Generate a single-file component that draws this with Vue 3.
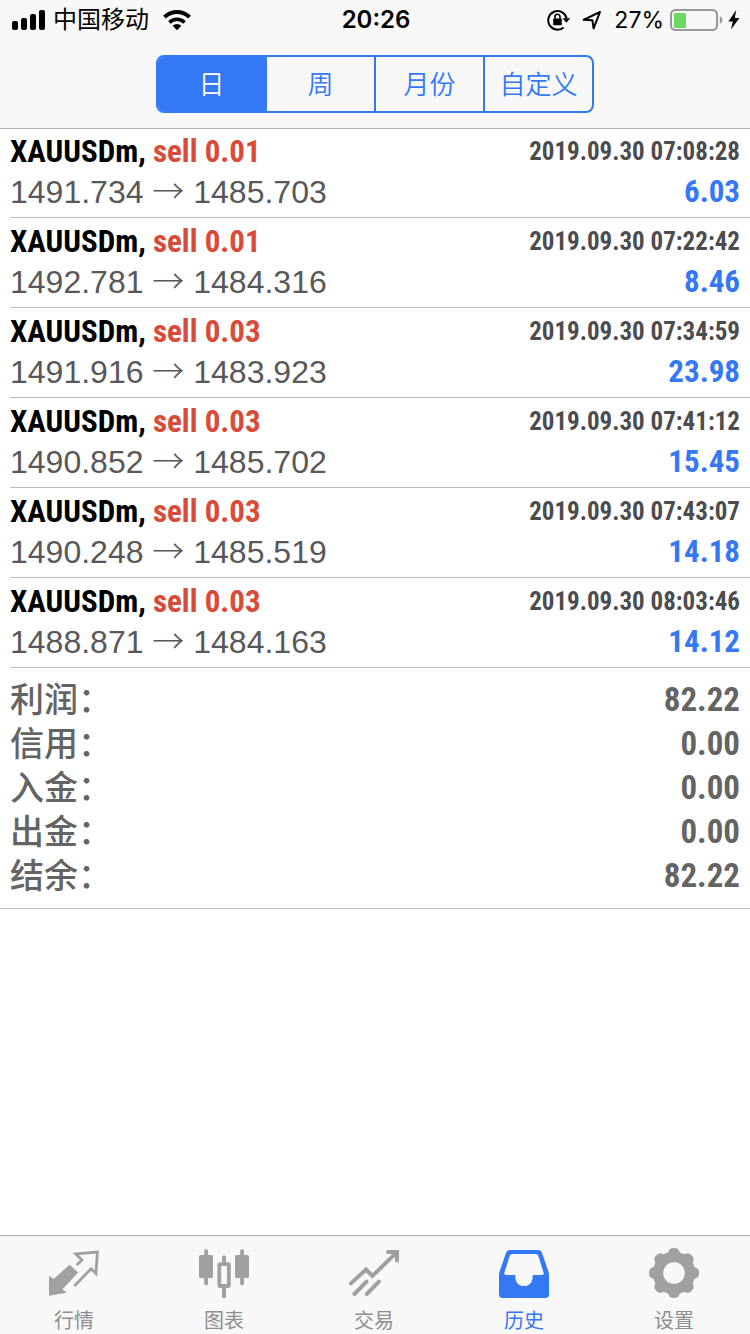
<script setup>
import { ref } from 'vue'

const periods = ['日', '周', '月份', '自定义']
const period = ref('日')

const deals = [
  { volume: '0.01', open: '1491.734', close: '1485.703', time: '2019.09.30 07:08:28', profit: '6.03' },
  { volume: '0.01', open: '1492.781', close: '1484.316', time: '2019.09.30 07:22:42', profit: '8.46' },
  { volume: '0.03', open: '1491.916', close: '1483.923', time: '2019.09.30 07:34:59', profit: '23.98' },
  { volume: '0.03', open: '1490.852', close: '1485.702', time: '2019.09.30 07:41:12', profit: '15.45' },
  { volume: '0.03', open: '1490.248', close: '1485.519', time: '2019.09.30 07:43:07', profit: '14.18' },
  { volume: '0.03', open: '1488.871', close: '1484.163', time: '2019.09.30 08:03:46', profit: '14.12' },
]

const totals = [
  { label: '利润', value: '82.22' },
  { label: '信用', value: '0.00' },
  { label: '入金', value: '0.00' },
  { label: '出金', value: '0.00' },
  { label: '结余', value: '82.22' },
]
</script>

<template>
  <div class="screen">
    <header class="top">
      <div class="status">
        <div class="status-left">
          <svg class="signal" width="34" height="22" viewBox="0 0 34 22" aria-hidden="true">
            <rect x="0" y="12" width="6" height="9" rx="2" />
            <rect x="9" y="9" width="6" height="12" rx="2" />
            <rect x="18" y="5" width="6" height="16" rx="2" />
            <rect x="27" y="1" width="6" height="20" rx="2" />
          </svg>
          <span class="carrier">中国移动</span>
          <svg class="wifi" width="28" height="22" viewBox="0 0 28 22" aria-hidden="true">
            <path d="M1.5 8.2a17.7 17.7 0 0 1 25 0" fill="none" stroke="#000" stroke-width="4" />
            <path d="M6.5 13.4a10.6 10.6 0 0 1 15 0" fill="none" stroke="#000" stroke-width="3.6" />
            <path d="M9.6 16.8a6.2 6.2 0 0 1 8.8 0L14 21.2Z" />
          </svg>
        </div>
        <time class="clock">20:26</time>
        <div class="status-right">
          <svg width="24" height="22" viewBox="0 0 24 22" aria-hidden="true">
            <path d="M16.6 18.4A9.3 9.3 0 1 1 19.6 9.2" fill="none" stroke="#000" stroke-width="2" />
            <path d="M15.6 9.2h7.6l-3.8 4.6Z" />
            <rect x="6.2" y="9.6" width="8.6" height="6.6" rx="0.8" />
            <path d="M8 10V7.8a2.5 2.5 0 0 1 5 0V10" fill="none" stroke="#000" stroke-width="1.6" />
          </svg>
          <svg class="locate" width="20" height="20" viewBox="0 0 20 20" aria-hidden="true">
            <path d="M1.6 9.8 18 2 11.6 18.4 10.4 10.2Z" fill="none" stroke="#000" stroke-width="2" stroke-linejoin="round" />
          </svg>
          <span class="percent">27%</span>
          <svg class="battery" width="54" height="22" viewBox="0 0 54 22" aria-hidden="true">
            <rect x="1" y="1" width="46" height="20" rx="4.5" fill="none" stroke="#98989a" stroke-width="2" />
            <rect x="4" y="4" width="12" height="15" rx="1" fill="#6cd864" />
            <path d="M49.8 7.2c3.6 1.4 3.6 6.2 0 7.6Z" fill="#98989a" />
          </svg>
          <svg class="bolt" width="12" height="20" viewBox="0 0 12 20" aria-hidden="true">
            <path d="M8.2 0 .4 11.4h4.4L3 19.6 11.4 8H6.8Z" />
          </svg>
        </div>
      </div>
      <div class="segments" role="group">
        <button
          v-for="p in periods"
          :key="p"
          type="button"
          class="segment"
          :class="{ on: p === period }"
          :aria-pressed="p === period"
          @click="period = p"
        >{{ p }}</button>
      </div>
    </header>

    <main class="content">
      <ul class="deals">
        <li v-for="d in deals" :key="d.time" class="deal">
          <div class="line">
            <span class="symbol">XAUUSDm, <span class="sell">sell {{ d.volume }}</span></span>
            <time class="when">{{ d.time }}</time>
          </div>
          <div class="line">
            <span class="prices">{{ d.open }} <span class="arrow">→</span> {{ d.close }}</span>
            <span class="profit">{{ d.profit }}</span>
          </div>
        </li>
      </ul>
      <dl class="totals">
        <div v-for="t in totals" :key="t.label" class="total">
          <dt>{{ t.label }}：</dt>
          <dd>{{ t.value }}</dd>
        </div>
      </dl>
    </main>

    <nav class="tabs">
      <a href="#quotes" class="tab">
        <svg width="50" height="50" viewBox="0 0 50 50" aria-hidden="true">
          <path d="M0 27.7 4.6 31 20.6 16.8 29.3 24.6 13.4 41.2 17.8 44.8 0 47.8Z" />
          <path d="M27.7 17 33 12 26.6 5.8 48.4 4 47 25.4 42 20.8 25.4 38" fill="none" stroke="currentColor" stroke-width="2.8" />
        </svg>
        <span>行情</span>
      </a>
      <a href="#charts" class="tab">
        <svg width="50" height="50" viewBox="0 0 50 50" aria-hidden="true">
          <rect x="5.2" y="1.2" width="3.8" height="36" rx="1.5" />
          <rect x="0" y="7" width="14" height="23" rx="1.5" />
          <rect x="41.2" y="1.2" width="3.8" height="36" rx="1.5" />
          <rect x="36" y="7" width="14" height="23" rx="1.5" />
          <rect x="23" y="7.6" width="4" height="9" rx="1.5" />
          <rect x="23" y="38" width="4" height="12" rx="1.5" />
          <rect x="20.3" y="16.2" width="9.6" height="21.8" rx="0.5" fill="none" stroke="currentColor" stroke-width="3.8" />
        </svg>
        <span>图表</span>
      </a>
      <a href="#trade" class="tab">
        <svg width="50" height="50" viewBox="0 0 50 50" aria-hidden="true">
          <g fill="none" stroke="currentColor" stroke-width="4" stroke-linecap="round">
            <path d="M2 35.4 17 21.6 23.4 28 47.6 4.4" />
            <path d="M39 4H48V12.4" />
            <path d="M17.6 33.6 5.4 46" />
            <path d="M30 33.6 17.8 46" />
          </g>
        </svg>
        <span>交易</span>
      </a>
      <a href="#history" class="tab active" aria-current="page">
        <svg width="50" height="50" viewBox="0 0 50 50" aria-hidden="true">
          <path
            fill-rule="evenodd"
            d="M11.2 2H38.8C41 2 42.4 3 43 5L49.4 23.6Q50 25.4 50 27V46.6Q50 50 46.6 50H3.4Q0 50 0 46.6V27Q0 25.4 .6 23.6L7 5C7.6 3 9 2 11.2 2ZM13.4 6Q11.2 6 10.6 8L5.4 24.6Q4.8 27 6.8 27H15.6Q16.4 27 16.4 28.4C16.2 34.6 19.8 38 25 38S33.8 34.6 33.6 28.4Q33.6 27 34.4 27H43.2Q45.2 27 44.6 24.6L39.4 8Q38.8 6 36.6 6Z"
          />
        </svg>
        <span>历史</span>
      </a>
      <a href="#settings" class="tab">
        <svg width="50" height="50" viewBox="0 0 50 50" aria-hidden="true">
          <circle cx="25" cy="25" r="16" fill="none" stroke="currentColor" stroke-width="10.4" />
          <g v-for="a in 8" :key="a" :transform="`rotate(${a * 45} 25 25)`">
            <path d="M16.6 6.4C18.6 5.4 19.2 4.6 19.8 3 20.6.8 22 0 25 0S29.4.8 30.2 3C30.8 4.6 31.4 5.4 33.4 6.4L30 12H20Z" />
          </g>
        </svg>
        <span>设置</span>
      </a>
    </nav>
  </div>
</template>

<style>
body {
  margin: 0;
  background: #fff;
}
</style>

<style scoped>
.screen {
  display: flex;
  flex-direction: column;
  min-height: 100vh;
  background: #fff;
  color: #000;
  font-family: "Liberation Sans", "Noto Sans CJK SC", sans-serif;
}

.top {
  display: flex;
  flex-direction: column;
  align-items: center;
  gap: 15px;
  margin-bottom: -1px;
  padding-bottom: 15px;
  background: #f8f8f8;
  border-bottom: 1px solid #b2b2b2;
}

.status {
  display: grid;
  grid-template-columns: 1fr auto 1fr;
  align-items: center;
  align-self: stretch;
  height: 40px;
  padding: 0 10px 0 12px;
  font-family: Inter, "Noto Sans CJK SC", sans-serif;
  font-size: 24px;
  line-height: 40px;
}

.status-left,
.status-right {
  display: flex;
  align-items: center;
}

.status-right {
  justify-content: flex-end;
}

.carrier {
  margin: 0 14px 0 7px;
}

.clock {
  font-weight: 600;
}

.percent {
  font-size: 23px;
}

.locate {
  margin: 0 12px 0 11px;
}

.battery {
  margin: 0 4px 0 6px;
}

.segments {
  display: flex;
  box-sizing: border-box;
  width: 438px;
  max-width: 100%;
  height: 58px;
  border: 2px solid #3478f6;
  border-radius: 8px;
  overflow: hidden;
}

.segment {
  flex: 1;
  padding: 0 0 2px;
  border: 0;
  background: transparent;
  color: #3478f6;
  font-family: "Noto Sans CJK SC", sans-serif;
  font-size: 26px;
  font-weight: 350;
  line-height: 52px;
}

.segment + .segment {
  border-left: 2px solid #3478f6;
}

.segment.on {
  background: #3478f6;
  color: #fff;
}

.content {
  flex: 1;
}

.deals {
  margin: 0;
  padding: 0 0 0 10px;
  list-style: none;
}

.deal {
  padding: 4px 10px 5px 0;
  border-bottom: 1px solid #bcbcbe;
}

.line {
  display: flex;
  justify-content: space-between;
  line-height: 40px;
  white-space: nowrap;
}

.symbol,
.when,
.profit,
.total dd {
  font-family: "Roboto Condensed", Roboto, "Liberation Sans", sans-serif;
  font-weight: 700;
}

.symbol {
  font-size: 31px;
}

.prices {
  color: #58585a;
  font-size: 32px;
}

.sell {
  color: #d94a38;
}

.when {
  color: #4c4c4e;
  font-size: 25px;
}

.arrow {
  font-family: "Noto Sans CJK SC", sans-serif;
  font-weight: 300;
  line-height: 1;
}

.profit {
  color: #3478f6;
  font-size: 31px;
}

.totals {
  margin: 0;
  padding: 10px;
  border-bottom: 1px solid #bcbcbe;
  color: #646464;
}

.total {
  display: flex;
  justify-content: space-between;
  line-height: 44px;
}

.total dt {
  font-family: "Liberation Sans", "Noto Sans CJK SC", sans-serif;
  font-size: 34px;
  font-weight: 500;
}

.total dd {
  margin: 0;
  font-size: 33px;
}

.tabs {
  display: flex;
  background: #f8f8f8;
  border-top: 1px solid #b2b2b2;
}

.tab {
  display: flex;
  flex: 1;
  flex-direction: column;
  align-items: center;
  gap: 10px;
  padding: 12px 2px 2px 0;
  color: #a0a0a0;
  font-family: "Noto Sans CJK SC", sans-serif;
  font-size: 20px;
  line-height: 24px;
  text-decoration: none;
}

.tab svg {
  fill: currentColor;
}

.tab span {
  color: #8e8e8e;
}

.tab.active,
.tab.active span {
  color: #3478f6;
}
</style>
